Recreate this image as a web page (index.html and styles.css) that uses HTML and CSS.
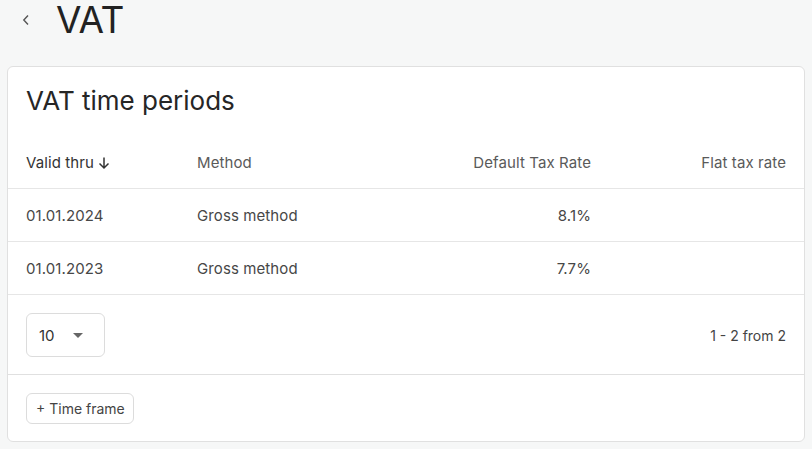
FILE: index.html
```html
<!DOCTYPE html>
<html>
<head>
<meta charset="utf-8">
<link rel="stylesheet" href="styles.css">
</head>
<body>
<header class="page-head">
  <button class="back" aria-label="Back">
    <svg width="10" height="12" viewBox="0 0 10 12"><path d="M7 1.5 L2.8 6 L7 10.5" fill="none" stroke="#555" stroke-width="1.4"/></svg>
  </button>
  <h1 class="page-title">VAT</h1>
</header>
<section class="card">
  <h2 class="card-title">VAT time periods</h2>
  <div class="table">
    <div class="row head">
      <div class="cell sorted">Valid thru
        <svg class="sort" width="14" height="14" viewBox="0 0 14 14"><path d="M7 1.5 V12 M2.5 7.5 L7 12 L11.5 7.5" fill="none" stroke="#333" stroke-width="1.5"/></svg>
      </div>
      <div class="cell">Method</div>
      <div class="cell num">Default Tax Rate</div>
      <div class="cell num">Flat tax rate</div>
    </div>
    <div class="row">
      <div class="cell">01.01.2024</div>
      <div class="cell">Gross method</div>
      <div class="cell num">8.1%</div>
      <div class="cell num"></div>
    </div>
    <div class="row">
      <div class="cell">01.01.2023</div>
      <div class="cell">Gross method</div>
      <div class="cell num">7.7%</div>
      <div class="cell num"></div>
    </div>
  </div>
  <div class="pager">
    <div class="select">
      <span>10</span>
      <svg width="10" height="6" viewBox="0 0 10 6"><path d="M0 0 H10 L5 5 Z" fill="#666"/></svg>
    </div>
    <div class="range">1 - 2 from 2</div>
  </div>
  <div class="actions">
    <button class="btn">+ Time frame</button>
  </div>
</section>
</body>
</html>
```
FILE: styles.css
```css
* { box-sizing: border-box; }
body {
  margin: 0;
  background: #f6f7f7;
  font-family: Inter, "Noto Sans", sans-serif;
  color: #333;
}
.page-head {
  display: flex;
  align-items: center;
  height: 40px;
  padding-left: 20px;
}
.back {
  border: 0;
  background: none;
  padding: 0;
  width: 12px;
  height: 14px;
  display: flex;
  align-items: center;
  justify-content: center;
  margin-top: -1px;
}
.page-title {
  margin: 0 0 0 24px;
  font-size: 37px;
  letter-spacing: -0.5px;
  font-weight: 400;
  color: #222;
  line-height: 44px;
}
.card {
  margin: 26px 7px 0;
  background: #fff;
  border: 1px solid #e0e0e0;
  border-radius: 6px;
}
.card-title {
  margin: 0;
  padding: 18px 18px 19px 18px;
  font-size: 26px;
  line-height: 32px;
  font-weight: 400;
  color: #262626;
}
.row {
  display: grid;
  grid-template-columns: 171px 1fr 198px 195px;
  height: 53px;
  border-bottom: 1px solid #e6e6e6;
  align-items: center;
  font-size: 15px;
  letter-spacing: 0.1px;
  color: #474747;
}
.cell {
  padding: 0 18px;
  display: flex;
  align-items: center;
}
.cell.num { justify-content: flex-end; }
.head .cell { color: #5a5a5a; }
.head .cell.sorted { color: #333; }
.sort { margin-left: 3px; margin-top: 2px; }
.pager {
  display: flex;
  align-items: center;
  justify-content: space-between;
  padding: 18px 18px 17px;
  border-bottom: 1px solid #e0e0e0;
}
.select {
  width: 79px;
  height: 44px;
  border: 1px solid #dcdcdc;
  border-radius: 6px;
  display: flex;
  align-items: center;
  padding-left: 12px;
  gap: 18px;
  font-size: 15px;
  color: #333;
}
.select svg { margin-top: 1px; }
.range {
  font-size: 14px;
  color: #444;
}
.actions {
  padding: 18px 18px 17px;
}
.btn {
  font-family: Inter, "Noto Sans", sans-serif;
  font-size: 14px;
  color: #444;
  background: #fff;
  border: 1px solid #dcdcdc;
  border-radius: 6px;
  height: 31px;
  padding: 0 8px 0 9px;
}
```
